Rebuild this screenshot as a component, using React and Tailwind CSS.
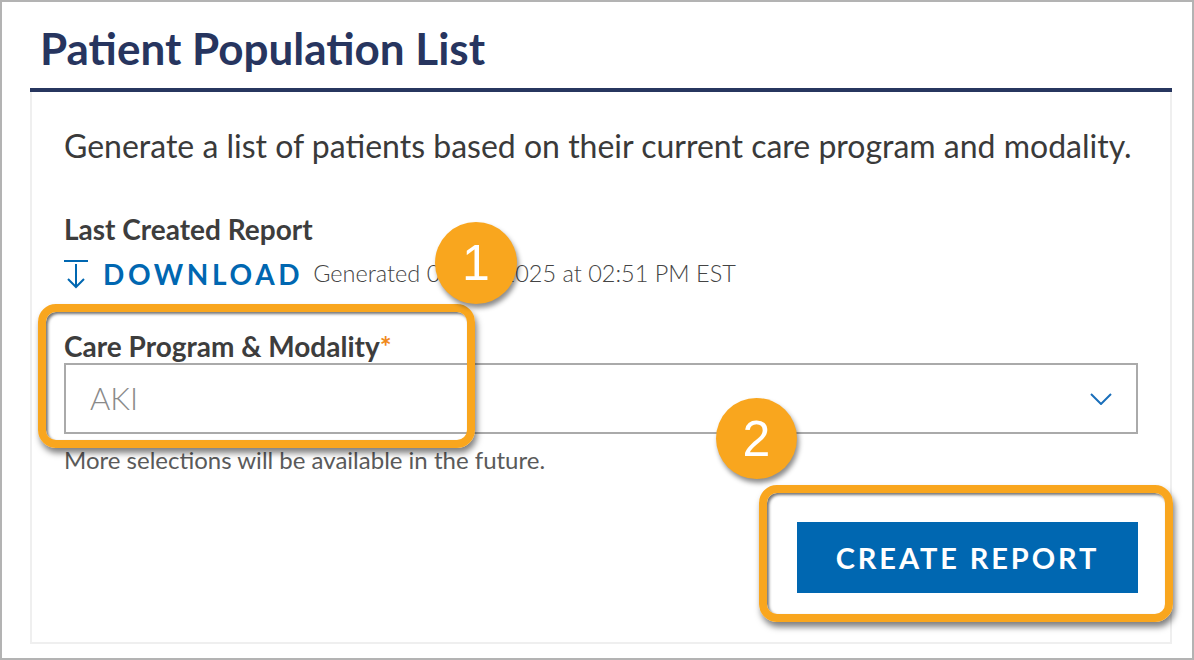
const lato = { fontFamily: "Lato, 'Open Sans', sans-serif" };

const Badge = ({ n, className }) => (
  <div
    className={`absolute flex items-center justify-center rounded-full bg-[#f9a61e] text-white shadow-[2px_4px_5px_rgba(0,0,0,0.45)] ${className}`}
  >
    <span className="text-[50px] leading-none font-['Liberation_Sans',Arial,sans-serif]">{n}</span>
  </div>
);

const Callout = ({ className }) => (
  <div
    className={`absolute rounded-[18px] border-[8px] border-[#f9a61e] shadow-[2px_5px_6px_rgba(0,0,0,0.5),inset_2px_2px_3px_rgba(0,0,0,0.55)] ${className}`}
  />
);

const App = () => (
  <div className="relative h-[660px] w-[1194px] overflow-hidden border-2 border-[#b3b3b3] bg-white" style={lato}>
    <h1 className="pl-[38px] pt-[22px] text-[44px] font-bold leading-[48px] text-[#27355f]">
      Patient Population List
    </h1>

    <div className="ml-[28px] mr-[20px] mt-[16px]">
      <div className="h-[4px] bg-[#27365f]" />
      <div className="h-[552px] border-2 border-t-0 border-[#efefef] px-[32px] pt-[37px]">
        <p className="text-[32px] leading-[34px] text-[#3a3a3a]">
          Generate a list of patients based on their current care program and modality.
        </p>

        <p className="mt-[51px] text-[28px] font-bold leading-[30px] text-[#3d3d3d]">Last Created Report</p>

        <div className="mt-[15px] flex h-[30px] items-center">
          <svg width="26" height="30" viewBox="0 0 26 30" className="ml-[-1px] text-[#0067b1]">
            <g fill="none" stroke="currentColor" strokeWidth="2">
              <path d="M1 2h24" />
              <path d="M13 5v23" />
              <path d="M5 20l8 8 8-8" />
            </g>
          </svg>
          <span className="ml-[14px] text-[28px] font-bold tracking-[0.13em] text-[#0067b1]">DOWNLOAD</span>
          <span className="ml-[10px] text-[23.5px] font-light text-[#444]">Generated 01/27/2025 at 02:51 PM EST</span>
        </div>

        <p className="mt-[42px] text-[28px] font-bold leading-[30px] text-[#3d3d3d]">
          Care Program &amp; Modality<span className="text-[#f08a1c]">*</span>
        </p>

        <div className="mt-[2px] flex h-[71px] items-center justify-between border-2 border-[#aaaaaa] pl-[24px] pr-[24px]">
          <span className="text-[31px] font-light text-[#8a8a8a]">AKI</span>
          <svg width="22" height="12" viewBox="0 0 22 12" className="text-[#1a6fba]">
            <path d="M1 1l10 10 10-10" fill="none" stroke="currentColor" strokeWidth="2" />
          </svg>
        </div>

        <p className="mt-[14px] text-[24px] leading-[24px] text-[#5a5a5a]">
          More selections will be available in the future.
        </p>

        <div className="mt-[50px] flex justify-end">
          <button className="h-[71px] w-[341px] bg-[#0067b1] text-[29px] font-bold tracking-[0.1em] text-white">
            CREATE REPORT
          </button>
        </div>
      </div>
    </div>

    <Callout className="left-[36px] top-[302px] h-[144px] w-[437px]" />
    <Badge n="1" className="left-[433px] top-[220px] h-[82px] w-[82px]" />
    <Callout className="left-[757px] top-[483px] h-[137px] w-[414px]" />
    <Badge n="2" className="left-[714px] top-[396px] h-[81px] w-[81px]" />
  </div>
);

export default App;
